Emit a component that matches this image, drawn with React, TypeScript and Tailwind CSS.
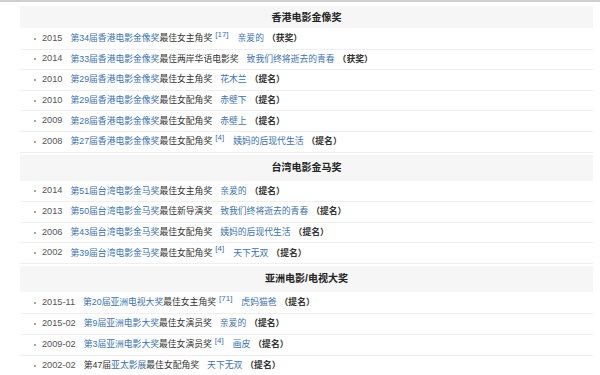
type Row = {
  year: string;
  prefix?: string;
  award: string;
  rest: string;
  note?: string;
  film: string;
  result: string;
};

type Section = { title: string; rows: Row[]; gap: string; rowH: string };

const sections: Section[] = [
  {
    title: '香港电影金像奖',
    gap: 'mt-[4px] h-[22px]',
    rowH: 'h-[20.6px]',
    rows: [
      { year: '2015', award: '第34届香港电影金像奖', rest: '最佳女主角奖', note: '[17]', film: '亲爱的', result: '（获奖）' },
      { year: '2014', award: '第33届香港电影金像奖', rest: '最佳两岸华语电影奖', film: '致我们终将逝去的青春', result: '（获奖）' },
      { year: '2010', award: '第29届香港电影金像奖', rest: '最佳女主角奖', film: '花木兰', result: '（提名）' },
      { year: '2010', award: '第29届香港电影金像奖', rest: '最佳女配角奖', film: '赤壁下', result: '（提名）' },
      { year: '2009', award: '第28届香港电影金像奖', rest: '最佳女配角奖', film: '赤壁上', result: '（提名）' },
      { year: '2008', award: '第27届香港电影金像奖', rest: '最佳女配角奖', note: '[4]', film: '姨妈的后现代生活', result: '（提名）' },
    ],
  },
  {
    title: '台湾电影金马奖',
    gap: 'mt-[2px] h-[26px]',
    rowH: 'h-[20.6px]',
    rows: [
      { year: '2014', award: '第51届台湾电影金马奖', rest: '最佳女主角奖', film: '亲爱的', result: '（提名）' },
      { year: '2013', award: '第50届台湾电影金马奖', rest: '最佳新导演奖', film: '致我们终将逝去的青春', result: '（提名）' },
      { year: '2006', award: '第43届台湾电影金马奖', rest: '最佳女配角奖', film: '姨妈的后现代生活', result: '（提名）' },
      { year: '2002', award: '第39届台湾电影金马奖', rest: '最佳女配角奖', note: '[4]', film: '天下无双', result: '（提名）' },
    ],
  },
  {
    title: '亚洲电影/电视大奖',
    gap: 'mt-[2px] h-[26px]',
    rowH: 'h-[21px]',
    rows: [
      { year: '2015-11', award: '第20届亚洲电视大奖', rest: '最佳女主角奖', note: '[71]', film: '虎妈猫爸', result: '（提名）' },
      { year: '2015-02', award: '第9届亚洲电影大奖', rest: '最佳女演员奖', film: '亲爱的', result: '（提名）' },
      { year: '2009-02', award: '第3届亚洲电影大奖', rest: '最佳女演员奖', note: '[4]', film: '画皮', result: '（提名）' },
      { year: '2002-02', prefix: '第47届', award: '亚太影展', rest: '最佳女配角奖', film: '天下无双', result: '（提名）' },
    ],
  },
];

function AwardRow({ row, h }: { row: Row; h: string }) {
  return (
    <div className={`${h} flex items-center border-b border-[#efefef] pl-[14px] text-[8.8px] whitespace-nowrap`}>
      <span className="w-[2px] h-[2px] rounded-full bg-[#888]" />
      <span className="ml-[6px] text-[9.2px] text-[#555]">{row.year}</span>
      <span className="ml-[8px]">
        {row.prefix && <span className="text-[#333]">{row.prefix}</span>}
        <span className="text-[#3d72ad]">{row.award}</span>
        <span className="text-[#333]">{row.rest}</span>
      </span>
      {row.note && (
        <span className="ml-[3px] -mt-[8px] text-[8px] text-[#3d72ad]">{row.note}</span>
      )}
      <span className={`${row.note ? 'ml-[9px]' : 'ml-[8px]'} text-[#3d72ad]`}>{row.film}</span>
      <span className="ml-[3px] text-[#333] font-bold">{row.result}</span>
    </div>
  );
}

export default function App() {
  return (
    <div
      className="w-[600px] h-[375px] overflow-hidden bg-white"
      style={{ fontFamily: '"Liberation Sans", "Noto Sans CJK SC", sans-serif' }}
    >
      <div className="h-[2px] bg-[#cfcfcf]" />
      <div className="ml-[20px] w-[573px]">
        {sections.map((s) => (
          <div key={s.title}>
            <div className={`${s.gap} flex items-center justify-center bg-[#f6f6f6] text-[10px] font-bold text-[#222]`}>
              {s.title}
            </div>
            <div className="h-[1px]" />
            {s.rows.map((r, i) => (
              <AwardRow key={i} row={r} h={s.rowH} />
            ))}
          </div>
        ))}
      </div>
    </div>
  );
}
